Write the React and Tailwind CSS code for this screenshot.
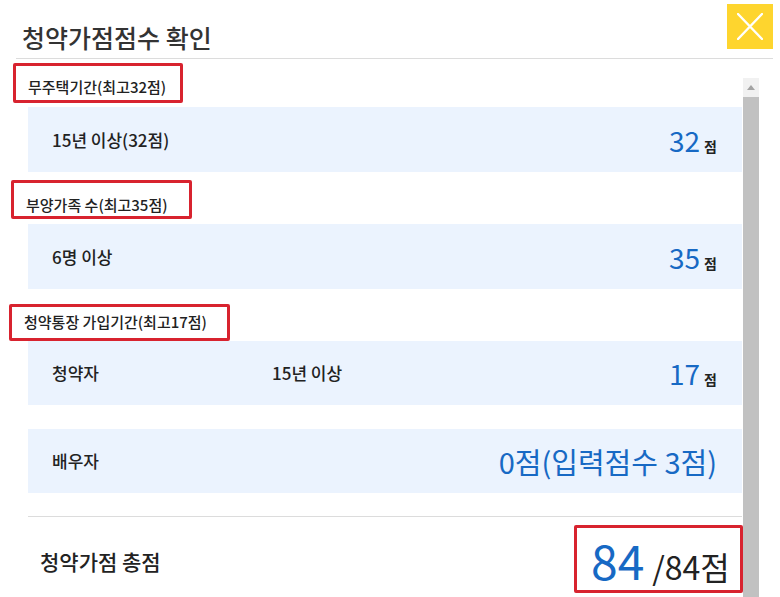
const FONT = "font-['Noto_Sans_CJK_KR','Noto_Sans',sans-serif]"

function SectionLabel({ children, ml, w, h, pt }) {
  return (
    <div
      className={`border-[3px] border-[#d8232f] rounded-[2px] text-[15px] leading-[20px] font-medium text-[#222] pl-[12px] whitespace-nowrap ${ml} ${w} ${h} ${pt}`}
    >
      {children}
    </div>
  )
}

function Score({ value, big }) {
  return (
    <div className="flex items-baseline">
      <span className={`text-[#1769c4] ${big ? 'text-[29px]' : 'text-[28px]'} leading-none`}>{value}</span>
      {!big && <span className="text-[14px] text-[#222] font-bold ml-[4px] leading-none">점</span>}
    </div>
  )
}

function Row({ children, score, big, h = 'h-[65px]' }) {
  return (
    <div className={`ml-[28px] w-[714px] ${h} bg-[#ebf3fe] flex items-center justify-between pl-[24px] pr-[25px]`}>
      <div className="flex items-center text-[17px] font-medium text-[#222]">{children}</div>
      <Score value={score} big={big} />
    </div>
  )
}

export default function App() {
  return (
    <div className={`w-[780px] h-[597px] bg-white overflow-hidden ${FONT}`}>
      {/* header */}
      <div className="h-[58px] flex items-start justify-between pl-[22px] pr-[7px]">
        <h1 className="mt-[23px] text-[25px] leading-[28px] font-medium text-[#333]">청약가점점수 확인</h1>
        <button className="mt-[4px] w-[46px] h-[45px] bg-[#fed52e] flex items-center justify-center">
          <svg width="26" height="27" viewBox="0 0 26 27" fill="none">
            <path d="M1 1 L25 26 M25 1 L1 26" stroke="white" strokeWidth="2.4" strokeLinecap="round" />
          </svg>
        </button>
      </div>
      <div className="ml-[16px] mr-[7px] h-px bg-[#dcdcdc]" />

      <div className="flex">
        <div className="w-[743px] shrink-0 flex flex-col">
          <div className="mt-[4px]">
            <SectionLabel ml="ml-[13px]" w="w-[170px]" h="h-[40px]" pt="pt-[11px]">무주택기간(최고32점)</SectionLabel>
          </div>
          <div className="mt-[4px]">
            <Row score="32">15년 이상(32점)</Row>
          </div>

          <div className="mt-[8px]">
            <SectionLabel ml="ml-[11px]" w="w-[181px]" h="h-[39px]" pt="pt-[12px]">부양가족 수(최고35점)</SectionLabel>
          </div>
          <div className="mt-[5px]">
            <Row score="35">6명 이상</Row>
          </div>

          <div className="mt-[15px]">
            <SectionLabel ml="ml-[9px]" w="w-[221px]" h="h-[37px]" pt="pt-[5px]">청약통장 가입기간(최고17점)</SectionLabel>
          </div>
          <div>
            <Row score="17" h="h-[64px]">
              <span className="w-[220px]">청약자</span>
              <span>15년 이상</span>
            </Row>
          </div>
          <div className="mt-[24px]">
            <Row score="0점(입력점수 3점)" big h="h-[64px]">배우자</Row>
          </div>

          <div className="mt-[23px] ml-[28px] w-[714px] h-px bg-[#dcdcdc]" />

          <div className="mt-[8px] flex items-center justify-between pl-[40px]">
            <span className="text-[21px] font-medium text-[#222] mt-[6px]">청약가점 총점</span>
            <div className="w-[169px] h-[68px] border-[3px] border-[#d8232f] rounded-[2px] flex items-baseline pl-[14px] pt-[2px]">
              <span className="text-[48px] leading-[58px] text-[#1769c4]">84</span>
              <span className="text-[32px] text-[#222] ml-[8px]">/84점</span>
            </div>
          </div>
        </div>

        {/* scrollbar */}
        <div className="mt-[19px] w-[16px] flex flex-col">
          <div className="h-[19px] bg-[#f1f1f1] flex items-center justify-center">
            <div className="w-0 h-0 border-l-[4px] border-r-[4px] border-b-[5px] border-l-transparent border-r-transparent border-b-[#a3a3a3]" />
          </div>
          <div className="h-[520px] bg-[#c1c1c1]" />
        </div>
      </div>
    </div>
  )
}
